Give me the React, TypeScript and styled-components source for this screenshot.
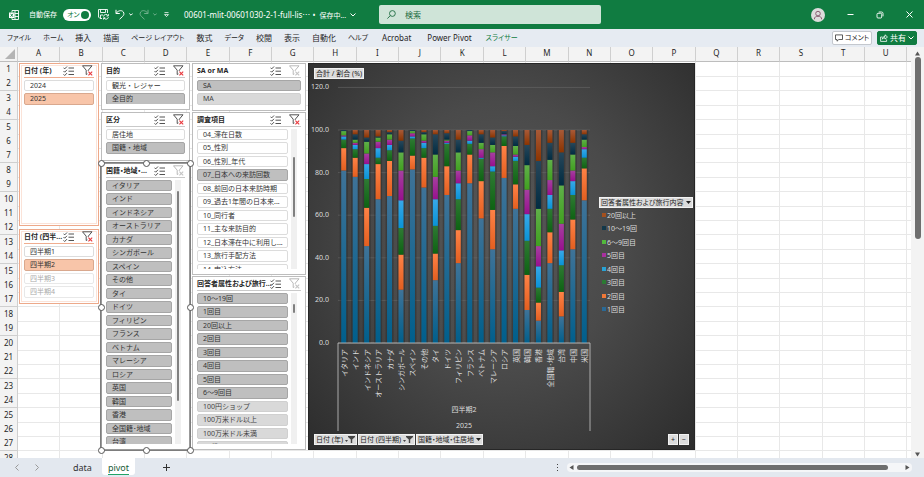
import React, { useEffect, useState } from "react";
import styled, { createGlobalStyle, css } from "styled-components";

const GlobalStyle = createGlobalStyle`
  * { box-sizing: border-box; }
  html, body, #root { height: 100%; }
  body {
    margin: 0;
    overflow: hidden;
    font-family: "Noto Sans", "Noto Sans CJK JP", sans-serif;
    font-size: 8px;
    color: #262626;
  }
  button, input { font: inherit; color: inherit; border: 0; background: none; padding: 0; margin: 0; }
  svg { display: block; flex: none; }
`;

/* ---------- window ---------- */

const Window = styled.div`
  display: flex;
  flex-direction: column;
  height: 100vh;
  background: #e3e8ef;
`;

const TitleBar = styled.header`
  display: flex;
  align-items: center;
  flex: none;
  height: 29px;
  background: #107c41;
  color: #fff;
`;

const TitleLeft = styled.div`
  display: flex;
  align-items: center;
  flex: none;
  width: 379px;
  padding-left: 9px;
`;

const AutoSave = styled.label`
  display: flex;
  align-items: center;
  gap: 6px;
  margin-left: 10px;
  font-size: 7px;
  line-height: 12px;
`;

const Switch = styled.span`
  position: relative;
  display: flex;
  align-items: center;
  width: 28px;
  height: 12px;
  padding-left: 4px;
  border-radius: 6px;
  background: #fff;
  color: #107c41;
  font-feature-settings: "palt";
  &::after {
    content: "";
    position: absolute;
    right: 2px;
    width: 8px;
    height: 8px;
    border-radius: 50%;
    background: #107c41;
  }
`;

const SwitchInput = styled.input`
  position: absolute;
  inset: 0;
  margin: 0;
  opacity: 0;
`;

const QuickAccess = styled.div`
  display: flex;
  align-items: center;
  gap: 6px;
  margin-left: 7px;
`;

const QuickButton = styled.button<{ $dim?: boolean }>`
  display: flex;
  align-items: center;
  gap: 4px;
  opacity: ${(p) => (p.$dim ? 0.4 : 1)};
`;

const DocTitle = styled.button`
  display: flex;
  align-items: center;
  gap: 4px;
  margin-left: 14px;
  font-size: 8px;
  white-space: nowrap;
`;

const SavingState = styled.span`
  font-size: 7px;
`;

const SearchBox = styled.label`
  display: flex;
  align-items: center;
  gap: 9px;
  flex: 0 1 222px;
  height: 19px;
  padding-left: 8px;
  border-radius: 2px;
  background: #cfe4d8;
  color: #1c6b40;
`;

const SearchInput = styled.input`
  width: 100%;
  font-size: 8px;
  outline: 0;
  &::placeholder { color: #1c6b40; opacity: 1; }
`;

const WindowControls = styled.div`
  display: flex;
  align-items: center;
  gap: 22px;
  margin-left: auto;
  padding-right: 11px;
`;

const Ribbon = styled.nav`
  display: flex;
  align-items: center;
  flex: none;
  height: 18px;
  padding: 0 7px;
  background: #e6ebf2;
`;

const RibbonTabs = styled.div`
  display: flex;
  gap: 12px;
`;

type TabKind = "kanji" | "kana" | "latin";

const RibbonTab = styled.button<{ $kind: TabKind; $active?: boolean }>`
  padding: 0 ${(p) => (p.$kind === "latin" ? 2 : 0)}px;
  white-space: nowrap;
  font-size: ${(p) => (p.$kind === "kana" ? 7 : 8)}px;
  line-height: 14px;
  font-feature-settings: "palt";
  color: ${(p) => (p.$active ? "#107c41" : "#262626")};
`;

const RibbonActions = styled.div`
  display: flex;
  gap: 5px;
  margin-left: auto;
`;

const ActionButton = styled.button<{ $primary?: boolean }>`
  display: flex;
  align-items: center;
  justify-content: center;
  gap: 2px;
  width: 40px;
  height: 14px;
  border: 1px solid ${(p) => (p.$primary ? "#107c41" : "#c4c8ce")};
  border-radius: 2px;
  background: ${(p) => (p.$primary ? "#107c41" : "#fff")};
  color: ${(p) => (p.$primary ? "#fff" : "#262626")};
  font-size: ${(p) => (p.$primary ? 8 : 7)}px;
  line-height: 12px;
  white-space: nowrap;
  font-feature-settings: "palt";
`;

/* ---------- sheet ---------- */

const SheetArea = styled.main`
  display: flex;
  flex: 1;
  min-height: 0;
`;

const Sheet = styled.div`
  position: relative;
  flex: 1;
  min-width: 0;
  overflow: hidden;
  background: #fff;
`;

/* 20 columns take 847px and 5 rows take 72px. */
const Grid = styled.table<{ $columns: number }>`
  display: block;
  width: calc(18px + ${(p) => p.$columns} * 847px / 20);
  border-collapse: collapse;
`;

const GridHead = styled.thead`
  display: block;
`;

const GridBody = styled.tbody<{ $rows: number }>`
  display: grid;
  grid-template-rows: repeat(${(p) => p.$rows}, minmax(0, 1fr));
  height: calc(${(p) => p.$rows} * 72px / 5);
`;

const GridRow = styled.tr<{ $columns: number }>`
  display: grid;
  grid-template-columns: 18px repeat(${(p) => p.$columns}, minmax(0, 1fr));
`;

const ColHead = styled.th`
  height: 15px;
  padding: 0;
  border-right: 1px solid #cfcfcf;
  border-bottom: 1px solid #bdbdbd;
  background: #f3f3f3;
  font-size: 8px;
  font-weight: 400;
  line-height: 11px;
`;

const CornerHead = styled.th`
  display: flex;
  justify-content: flex-end;
  align-items: flex-end;
  padding: 2px;
  border-right: 1px solid #cfcfcf;
  border-bottom: 1px solid #bdbdbd;
  background: #f3f3f3;
`;

const RowHead = styled.th`
  padding: 0;
  border-right: 1px solid #cfcfcf;
  border-bottom: 1px solid #cfcfcf;
  background: #f3f3f3;
  font-size: 8px;
  font-weight: 400;
  line-height: 14px;
  text-align: center;
`;

const Cell = styled.td`
  padding: 0;
  border-right: 1px solid #e8e8e8;
  border-bottom: 1px solid #e8e8e8;
`;

const ObjectLayer = styled.div`
  position: absolute;
  top: 16px;
  left: 19px;
  display: flex;
  align-items: flex-start;
  gap: 2px;
`;

const SlicerColumn = styled.div<{ $width: number; $gap: number }>`
  display: flex;
  flex-direction: column;
  gap: ${(p) => p.$gap}px;
  width: ${(p) => p.$width}px;
`;

/* ---------- slicers ---------- */

type Tone = "orange" | "gray";

const SlicerBox = styled.section<{ $tone: Tone; $height: number; $selected?: boolean }>`
  position: relative;
  display: flex;
  flex-direction: column;
  height: ${(p) => p.$height}px;
  padding: 0 4px 5px;
  border: 1px solid ${(p) => (p.$tone === "orange" ? "#eda98a" : "#bdbdbd")};
  background: #fff;
  ${(p) => p.$tone === "orange" && css`box-shadow: inset 0 0 0 1px #fff, inset 0 0 0 2px #fbe3d8;`}
  ${(p) => p.$selected && css`z-index: 1; outline: 1px solid #7d7d7d; border-color: #9a9a9a;`}
`;

const SlicerHeader = styled.div<{ $tone: Tone }>`
  display: flex;
  align-items: center;
  flex: none;
  gap: 8px;
  height: 14px;
  margin-bottom: 2px;
  padding-right: 1px;
  border-bottom: 1px solid ${(p) => (p.$tone === "orange" ? "#efad90" : "#c9c9c9")};
`;

const SlicerTitle = styled.h2`
  flex: 1;
  min-width: 0;
  margin: 0;
  font-size: 7px;
  line-height: 12px;
  font-weight: 700;
  white-space: nowrap;
  font-feature-settings: "palt";
`;

const IconButton = styled.button`
  display: flex;
  flex: none;
`;

const SlicerBody = styled.div`
  display: flex;
  flex: 1;
  gap: 3px;
  min-height: 0;
`;

const SlicerList = styled.div`
  display: flex;
  flex-direction: column;
  flex: 1;
  gap: 2px;
  min-width: 0;
  overflow: hidden;
`;

type ItemState = "on" | "off" | "empty" | "faded";

const itemStyles = {
  gray: {
    on: css`background: #bfbfbf; border-color: #a6a6a6;`,
    off: css`background: #fff; border-color: #dcdcdc;`,
    empty: css`background: #d9d9d9; border-color: #d0d0d0; color: #444;`,
    faded: css`background: #fff; border-color: #e8e8e8; color: #aaa;`,
  },
  orange: {
    on: css`background: #f8c5a9; border-color: #d9a88e;`,
    off: css`background: #fff; border-color: #dcdcdc;`,
    empty: css`background: #fff; border-color: #e8e8e8;`,
    faded: css`background: #fff; border-color: #e8e8e8; color: #aaa;`,
  },
};

const SlicerItem = styled.button<{ $tone: Tone; $state: ItemState }>`
  flex: none;
  height: 11px;
  padding: 0 5px;
  border: 1px solid;
  border-radius: 2px;
  color: #333;
  font-size: 7px;
  line-height: 9px;
  text-align: left;
  white-space: nowrap;
  overflow: hidden;
  &:nth-child(even) { height: 12px; line-height: 10px; }
  ${(p) => itemStyles[p.$tone][p.$state]}
`;

const SlicerTrack = styled.div<{ $before: number }>`
  flex: none;
  width: 6px;
  margin-right: 4px;
  padding: ${(p) => p.$before}px 2px 0;
  background: #f0f0f0;
`;

const SlicerThumb = styled.div<{ $length: number }>`
  height: ${(p) => p.$length}px;
  border-radius: 1px;
  background: #808080;
`;

const Handle = styled.span<{ $x: string; $y: string }>`
  position: absolute;
  left: ${(p) => p.$x};
  top: ${(p) => p.$y};
  width: 7px;
  height: 7px;
  margin: -3px;
  border: 1px solid #555;
  border-radius: 50%;
  background: #fff;
`;

const MultiSelectIcon = () => (
  <svg width="11" height="10" viewBox="0 0 11 10" fill="none" stroke="#404040" strokeWidth="0.9">
    <path d="M0.5 1.7l1.2 1.2L4 0.5M0.5 5l1.2 1.2L4 3.8M0.5 8.3l1.2 1.2L4 7.1M5.5 2H11M5.5 5.2H11M5.5 8.5H11" />
  </svg>
);

const FilterIcon = ({ active }: { active: boolean }) => (
  <svg width="11" height="11" viewBox="0 0 11 11" fill="none" stroke={active ? "#404040" : "#b0b0b0"} strokeWidth="0.9">
    <path d="M0.5 0.8H10L6.3 5.2V6M0.5 0.8L4.2 5.2V9.5L5.4 8.9" />
    <path d="M6.4 6.6L10.2 10.4M10.2 6.6L6.4 10.4" stroke={active ? "#e8383d" : "#c4c4c4"} strokeWidth="1.1" />
  </svg>
);

interface SlicerProps {
  title: string;
  height: number;
  tone?: Tone;
  items: [string, ItemState][];
  filtered?: boolean;
  selected?: boolean;
  scroll?: [number, number];
}

const near = "-1px";
const mid = "50%";
const far = "calc(100% + 1px)";
const handles = [
  [near, near], [mid, near], [far, near],
  [near, mid], [far, mid],
  [near, far], [mid, far], [far, far],
];

function Slicer({ title, height, tone = "gray", items, filtered = true, selected, scroll }: SlicerProps) {
  return (
    <SlicerBox $tone={tone} $height={height} $selected={selected} aria-label={title}>
      <SlicerHeader $tone={tone}>
        <SlicerTitle>{title}</SlicerTitle>
        <IconButton aria-label="複数選択"><MultiSelectIcon /></IconButton>
        <IconButton aria-label="フィルターのクリア"><FilterIcon active={filtered} /></IconButton>
      </SlicerHeader>
      <SlicerBody>
        <SlicerList>
          {items.map(([label, state]) => (
            <SlicerItem key={label} $tone={tone} $state={state} aria-pressed={state === "on"}>
              {label}
            </SlicerItem>
          ))}
        </SlicerList>
        {scroll && (
          <SlicerTrack $before={scroll[0]}>
            <SlicerThumb $length={scroll[1]} />
          </SlicerTrack>
        )}
      </SlicerBody>
      {selected && handles.map(([x, y]) => <Handle key={x + y} $x={x} $y={y} />)}
    </SlicerBox>
  );
}

const all = (labels: string[], state: ItemState): [string, ItemState][] => labels.map((l) => [l, state]);

/* ---------- chart ---------- */

const ChartBox = styled.section`
  display: flex;
  flex-direction: column;
  width: 387px;
  height: 387px;
  padding: 4px 5px;
  border: 1px solid #262626;
  background: radial-gradient(ellipse at 50% 45%, #585858 0%, #4a4a4a 45%, #2c2c2c 100%);
  color: #dcdcdc;
`;

const FieldButton = styled.button`
  display: flex;
  align-items: center;
  justify-content: center;
  gap: 2px;
  min-width: 10px;
  height: 11px;
  padding: 0 1px;
  border: 1px solid #f2f2f2;
  background: #dcdcdc;
  color: #1c1c1c;
  font-size: 7px;
  line-height: 9px;
  white-space: nowrap;
  font-feature-settings: "palt";
`;

const ChartMiddle = styled.div`
  display: flex;
  flex: 1;
  min-height: 0;
`;

const Legend = styled.div`
  flex: 1;
  min-width: 0;
  padding-top: 118px;
`;

const LegendList = styled.ul`
  margin: 0;
  padding: 0 3px;
  list-style: none;
`;

const LegendItem = styled.li<{ $color: string }>`
  display: flex;
  align-items: center;
  gap: 1px;
  height: 13px;
  font-size: 7px;
  &:nth-child(even) { height: 14px; }
  &::before {
    content: "";
    width: 4px;
    height: 4px;
    background: ${(p) => p.$color};
  }
`;

const FieldRow = styled.div`
  display: flex;
  gap: 1px;
`;

const Spacer = styled.span`
  flex: 1;
`;

const Caret = () => (
  <svg width="5" height="3" viewBox="0 0 5 3"><path d="M0 0h5L2.5 3z" fill="#222" /></svg>
);

const CaretFilter = () => (
  <svg width="10" height="7" viewBox="0 0 10 7" fill="#444">
    <path d="M0 4h3L1.5 6zM3 0h7v1L7.2 3.6V7H5.8V3.6L3 1z" />
  </svg>
);

const series = [
  { name: "1回目", top: "#3f7398", bottom: "#005f8c", key: "#2a6a96" },
  { name: "2回目", top: "#ff8246", bottom: "#e35f20", key: "#f07838" },
  { name: "3回目", top: "#2f7a34", bottom: "#0d6312", key: "#2b7a33" },
  { name: "4回目", top: "#38a8e8", bottom: "#0a93d6", key: "#27a3d6" },
  { name: "5回目", top: "#a640a0", bottom: "#98108e", key: "#a8309f" },
  { name: "6〜9回目", top: "#60b04a", bottom: "#41a020", key: "#52b83c" },
  { name: "10〜19回", top: "#28475a", bottom: "#012c42", key: "#12384a" },
  { name: "20回以上", top: "#a85a38", bottom: "#8c3400", key: "#a3501f" },
];

/* Running totals (%) for 1回目 … 10〜19回; 20回以上 always closes the bar at 100. */
const bars: [string, number[]][] = [
  ["イタリア", [81, 91.5, 95.5, 97, 97.5, 99.5, 100]],
  ["インド", [78, 87, 91, 93, 94, 95.5, 98]],
  ["インドネシア", [45.5, 63.5, 77, 84, 89, 94.5, 96.5]],
  ["オーストラリア", [67.5, 84, 87, 91.5, 94.5, 96.5, 97]],
  ["カナダ", [69, 85.5, 90.5, 93, 95.5, 98, 99]],
  ["シンガポール", [25, 41.5, 54, 67, 81, 89.5, 95]],
  ["スペイン", [81.5, 88, 96, 97, 98.5, 99.5, 100]],
  ["その他", [73, 87, 91.5, 94, 95, 98, 99]],
  ["タイ", [29.5, 42, 55, 67.5, 78, 88.5, 98]],
  ["ドイツ", [69.5, 83, 93.5, 94, 95, 95.5, 98.5]],
  ["フィリピン", [37.5, 53, 67.5, 75, 81, 89.5, 95.5]],
  ["フランス", [75, 88.5, 93.5, 95, 97.5, 99.5, 100]],
  ["ベトナム", [58.5, 76, 86.5, 87, 91, 94, 98]],
  ["マレーシア", [44, 62.5, 80.5, 83, 89.5, 93, 96.5]],
  ["ロシア", [77.5, 92.5, 97, 97.5, 98, 98, 99.5]],
  ["英国", [63, 74.5, 85.5, 87.5, 88.5, 92.5, 97]],
  ["韓国", [15.5, 32, 48, 60.5, 72, 83.5, 93]],
  ["香港", [10.5, 19, 26, 36, 45.5, 63, 85.5]],
  ["全国籍･地域", [37.5, 52, 63, 69.5, 76.5, 86, 94]],
  ["台湾", [12.5, 24, 36.5, 43.5, 56, 74, 89.5]],
  ["中国", [44, 58, 69.5, 76, 81, 88.5, 94]],
  ["米国", [67, 82, 87, 91, 92, 95.5, 98]],
];

const plot = { left: 24, right: 276, zero: 264, hundred: 51 };
const yOf = (v: number) => plot.zero - ((plot.zero - plot.hundred) * v) / 100;
const step = (plot.right - plot.left) / bars.length;

const PlotSvg = styled.svg`
  overflow: visible;
  font-size: 7px;
  fill: #dcdcdc;
`;

function Plot() {
  return (
    <PlotSvg width="285" height="355" viewBox="0 0 285 355" role="img" aria-label="割合 (%)">
      <defs>
        {series.map((s, i) => (
          <linearGradient key={s.name} id={`fill${i}`} x1="0" y1="0" x2="0" y2="1">
            <stop offset="0" stopColor={s.top} />
            <stop offset="1" stopColor={s.bottom} />
          </linearGradient>
        ))}
      </defs>
      {[0, 20, 40, 60, 80, 100, 120].map((v) => (
        <g key={v}>
          <line x1={plot.left} x2={plot.right} y1={yOf(v)} y2={yOf(v)} stroke="#686868" strokeWidth="0.6" />
          <text x="15" y={yOf(v) + 2} textAnchor="end">{v.toFixed(1)}</text>
        </g>
      ))}
      {bars.map(([name, totals], i) => {
        const center = plot.left + step * (i + 0.5);
        const edges = [0, ...totals, 100];
        return (
          <g key={name}>
            <rect x={center - 4} y={plot.hundred} width="8" height={plot.zero - plot.hundred} fill="#222" opacity="0.4" />
            {series.map((s, k) => (
              <rect
                key={s.name}
                x={center - 2.5}
                width="5"
                y={yOf(edges[k + 1])}
                height={yOf(edges[k]) - yOf(edges[k + 1])}
                fill={`url(#fill${k})`}
              />
            ))}
            <text transform={`translate(${center + 3} 270) rotate(-90)`} textAnchor="end">{name}</text>
          </g>
        );
      })}
      <path d={`M${plot.left} 352V${plot.zero}H${plot.right}V352`} fill="none" stroke="#c8c8c8" strokeWidth="0.8" />
      <text x="150" y="333" textAnchor="middle">四半期2</text>
      <text x="150" y="349" textAnchor="middle">2025</text>
    </PlotSvg>
  );
}

function Chart() {
  return (
    <ChartBox>
      <FieldRow><FieldButton>合計 / 割合 (%)</FieldButton></FieldRow>
      <ChartMiddle>
        <Plot />
        <Legend>
          <FieldButton>回答者属性および旅行内容 <Caret /></FieldButton>
          <LegendList>
            {[...series].reverse().map((s) => (
              <LegendItem key={s.name} $color={s.key}>{s.name}</LegendItem>
            ))}
          </LegendList>
        </Legend>
      </ChartMiddle>
      <FieldRow>
        <FieldButton>日付 (年) <CaretFilter /></FieldButton>
        <FieldButton>日付 (四半期) <CaretFilter /></FieldButton>
        <FieldButton>国籍・地域・住居地 <Caret /></FieldButton>
        <Spacer />
        <FieldButton>+</FieldButton>
        <FieldButton>−</FieldButton>
      </FieldRow>
    </ChartBox>
  );
}

/* ---------- scroll bars and sheet tabs ---------- */

const VerticalBar = styled.div`
  display: flex;
  flex-direction: column;
  align-items: center;
  flex: none;
  width: 13px;
  padding: 4px 0 1px;
  background: #f3f3f3;
`;

const VerticalThumb = styled.div`
  width: 6px;
  height: 182px;
  margin-top: 1px;
  margin-bottom: auto;
  border-radius: 3px;
  background: #6e6e6e;
`;

const BottomBar = styled.footer`
  display: flex;
  flex: none;
  height: 19px;
  background: #e3e8ef;
`;

const SheetNav = styled.div`
  display: flex;
  align-items: center;
  gap: 16px;
  width: 67px;
  padding-left: 15px;
`;

const SheetTab = styled.button<{ $active?: boolean }>`
  height: 17px;
  margin-right: 4px;
  padding: 0 6px;
  border-radius: 0 0 3px 3px;
  background: ${(p) => (p.$active ? "#fff" : "transparent")};
  color: ${(p) => (p.$active ? "#185c37" : "#333")};
  font-size: 9px;
  line-height: 17px;
`;

const TabLabel = styled.span<{ $active?: boolean }>`
  display: block;
  height: 16px;
  border-bottom: 1px solid ${(p) => (p.$active ? "#21a366" : "transparent")};
`;

const AddSheet = styled.button`
  margin-left: 24px;
`;

const HorizontalBar = styled.div`
  display: flex;
  align-items: center;
  gap: 3px;
  width: 345px;
  height: 9px;
  margin: 5px 12px 0 8px;
  padding: 0 2px;
  border-radius: 4px;
  background: #f5f6f8;
`;

const HorizontalThumb = styled.div`
  flex: 1;
  height: 5px;
  margin-right: 14px;
  border-radius: 3px;
  background: #6e6e6e;
`;

const MoreIcon = styled.svg`
  margin: 5px 0 0 auto;
`;

const Arrow = ({ d }: { d: string }) => (
  <svg width="5" height="5" viewBox="0 0 5 5"><path d={d} fill="#555" /></svg>
);

const Chevron = () => (
  <svg width="6" height="4" viewBox="0 0 6 4" fill="none" stroke="currentColor"><path d="M0.5 0.5L3 3L5.5 0.5" /></svg>
);

const tabs: [string, TabKind][] = [
  ["ファイル", "kana"], ["ホーム", "kana"], ["挿入", "kanji"], ["描画", "kanji"], ["ページ レイアウト", "kana"],
  ["数式", "kanji"], ["データ", "kana"], ["校閲", "kanji"], ["表示", "kanji"], ["自動化", "kanji"],
  ["ヘルプ", "kana"], ["Acrobat", "latin"], ["Power Pivot", "latin"], ["スライサー", "kana"],
];

const countries = ["イタリア", "インド", "インドネシア", "オーストラリア", "カナダ", "シンガポール", "スペイン", "その他", "タイ", "ドイツ", "フィリピン", "フランス", "ベトナム", "マレーシア", "ロシア", "英国", "韓国", "香港", "全国籍･地域", "台湾"];

const columnName = (i: number): string => (i < 26 ? "" : columnName(Math.floor(i / 26) - 1)) + String.fromCharCode(65 + (i % 26));

/* Number of columns and rows needed to fill the window. */
const measure = () => ({
  columns: Math.ceil(((window.innerWidth - 31) * 20) / 847),
  rows: Math.ceil(((window.innerHeight - 81) * 5) / 72),
});

function useGridSize() {
  const [size, setSize] = useState(measure);
  useEffect(() => {
    const update = () => setSize(measure());
    window.addEventListener("resize", update);
    return () => window.removeEventListener("resize", update);
  }, []);
  return size;
}

function SheetGrid() {
  const size = useGridSize();
  const columns = Array.from({ length: size.columns }, (_, i) => columnName(i));
  const rows = Array.from({ length: size.rows }, (_, i) => i + 1);
  return (
    <Grid $columns={size.columns}>
      <GridHead>
        <GridRow $columns={size.columns}>
          <CornerHead aria-label="すべて選択"><svg width="10" height="10" viewBox="0 0 10 10"><path d="M10 0V10H0z" fill="#b4b4b4" /></svg></CornerHead>
          {columns.map((c) => <ColHead key={c} scope="col">{c}</ColHead>)}
        </GridRow>
      </GridHead>
      <GridBody $rows={size.rows}>
        {rows.map((r) => (
          <GridRow key={r} $columns={size.columns}>
            <RowHead scope="row">{r}</RowHead>
            {columns.map((c) => <Cell key={c} />)}
          </GridRow>
        ))}
      </GridBody>
    </Grid>
  );
}

export default function App() {
  return (
    <Window lang="ja">
      <GlobalStyle />
      <TitleBar>
        <TitleLeft>
          <svg width="10" height="10" viewBox="0 0 10 10" fill="none" stroke="#fff">
            <path d="M3 2.5V0.5H9.5V9.5H3V7.5M6 0.5V9.5M6 3.5H9.5M6 6.5H9.5" strokeWidth="0.9" />
            <path d="M0 2.5H5.5V8H0z" fill="#fff" stroke="none" />
            <path d="M1.5 3.7L4 6.8M4 3.7L1.5 6.8" stroke="#107c41" strokeWidth="0.9" />
          </svg>
          <AutoSave>
            自動保存
            <Switch>オン<SwitchInput type="checkbox" role="switch" defaultChecked /></Switch>
          </AutoSave>
          <QuickAccess>
            <QuickButton aria-label="保存">
              <svg width="11" height="11" viewBox="0 0 11 11" fill="none" stroke="#fff" strokeWidth="0.9">
                <path d="M4 9.5H2L0.5 8V0.5H9.5V4M2.5 0.5V3.5H7.5V0.5M2.5 9V6H5" />
                <path d="M5.5 7.5A2.4 2.4 0 0 1 10 6.7M10.3 5V7H8.5M10.4 8.2A2.4 2.4 0 0 1 6 9M5.6 10.6V8.8H7.3" />
              </svg>
            </QuickButton>
            <QuickButton aria-label="元に戻す">
              <svg width="10" height="11" viewBox="0 0 10 11" fill="none" stroke="#fff"><path d="M1 0.8V4.5H4.8M1.2 4.3C3 1.5 6.5 0.8 8.2 2.8C9.6 4.6 8.8 6.3 7.5 7.5L4.5 10.3" /></svg>
              <svg width="4" height="3" viewBox="0 0 4 3" fill="none" stroke="#fff"><path d="M0.3 0.5L2 2.2L3.7 0.5" /></svg>
            </QuickButton>
            <QuickButton $dim aria-label="やり直し">
              <svg width="10" height="11" viewBox="0 0 10 11" fill="none" stroke="#fff"><path d="M9 0.8V4.5H5.2M8.8 4.3C7 1.5 3.5 0.8 1.8 2.8C0.4 4.6 1.2 6.3 2.5 7.5L5.5 10.3" /></svg>
              <svg width="4" height="3" viewBox="0 0 4 3" fill="none" stroke="#fff"><path d="M0.3 0.5L2 2.2L3.7 0.5" /></svg>
            </QuickButton>
            <QuickButton aria-label="クイック アクセス ツール バーのカスタマイズ">
              <svg width="7" height="6" viewBox="0 0 7 6" fill="none" stroke="#fff" strokeWidth="0.8"><path d="M1.5 0.6H5.5M1.5 2.6H5.5L3.5 4.6z" /></svg>
            </QuickButton>
          </QuickAccess>
          <DocTitle>00601-mlit-00601030-2-1-full-lis⋯ • <SavingState>保存中...</SavingState> <Chevron /></DocTitle>
        </TitleLeft>
        <SearchBox>
          <svg width="9" height="9" viewBox="0 0 9 9" fill="none" stroke="currentColor" strokeWidth="0.9"><circle cx="5.4" cy="3.5" r="2.9" /><path d="M3.3 5.6L0.4 8.6" /></svg>
          <SearchInput placeholder="検索" aria-label="検索" />
        </SearchBox>
        <WindowControls>
          <IconButton aria-label="アカウント">
            <svg width="14" height="14" viewBox="0 0 14 14" fill="none"><circle cx="7" cy="7" r="7" fill="#dcdcdc" /><circle cx="7" cy="5.6" r="2.3" stroke="#8a5f72" /><path d="M3.3 11.3C3.5 8.8 5 8.3 7 8.3S10.5 8.8 10.7 11.3" stroke="#8a5f72" /></svg>
          </IconButton>
          <IconButton aria-label="最小化"><svg width="7" height="7" viewBox="0 0 7 7" stroke="#fff"><path d="M0.5 3.5H6.5" /></svg></IconButton>
          <IconButton aria-label="元に戻す (縮小)"><svg width="8" height="8" viewBox="0 0 8 8" fill="none" stroke="#fff" strokeWidth="0.9"><rect x="1" y="2.3" width="4.7" height="4.7" rx="1" /><path d="M2.7 1H5.5Q7 1 7 2.5V5.3" /></svg></IconButton>
          <IconButton aria-label="閉じる"><svg width="7" height="7" viewBox="0 0 7 7" stroke="#fff"><path d="M0.5 0.5L6.5 6.5M6.5 0.5L0.5 6.5" /></svg></IconButton>
        </WindowControls>
      </TitleBar>

      <Ribbon>
        <RibbonTabs>
          {tabs.map(([label, kind]) => (
            <RibbonTab key={label} $kind={kind} $active={label === "スライサー"}>{label}</RibbonTab>
          ))}
        </RibbonTabs>
        <RibbonActions>
          <ActionButton>
            <svg width="8" height="8" viewBox="0 0 8 8" fill="none" stroke="#333" strokeWidth="0.8"><path d="M0.5 0.9H7.5V5.5H3.8L2 7.2V5.5H0.5z" /></svg>
            コメント
          </ActionButton>
          <ActionButton $primary>
            <svg width="8" height="8" viewBox="0 0 8 8" fill="none" stroke="#fff" strokeWidth="0.8"><path d="M2.5 3H0.6V7.4H6.6V5.5M2.3 5.2C2.5 3.2 3.6 2.5 5 2.4V0.8L7.5 3L5 5.1V3.7C3.8 3.7 3 4.1 2.3 5.2z" /></svg>
            共有
            <Chevron />
          </ActionButton>
        </RibbonActions>
      </Ribbon>

      <SheetArea>
        <Sheet>
          <SheetGrid />
          <ObjectLayer>
            <SlicerColumn $width={80} $gap={3}>
              <Slicer title="日付 (年)" height={163} tone="orange" items={[["2024", "off"], ["2025", "on"]]} />
              <Slicer title="日付 (四半..." height={75} tone="orange" items={[["四半期1", "off"], ["四半期2", "on"], ["四半期3", "faded"], ["四半期4", "faded"]]} />
            </SlicerColumn>
            <SlicerColumn $width={89} $gap={2}>
              <Slicer title="目的" height={47} items={[["観光・レジャー", "off"], ["全目的", "on"]]} />
              <Slicer title="区分" height={49} items={[["居住地", "off"], ["国籍・地域", "on"]]} />
              <Slicer title="国籍・地域・..." height={287} selected filtered={false} scroll={[11, 210]} items={all(countries, "on")} />
            </SlicerColumn>
            <SlicerColumn $width={114} $gap={1}>
              <Slicer title="SA or MA" height={48} filtered={false} items={[["SA", "on"], ["MA", "empty"]]} />
              <Slicer
                title="調査項目"
                height={163}
                scroll={[28, 60]}
                items={[
                  ["04_滞在日数", "off"], ["05_性別", "off"], ["06_性別_年代", "off"], ["07_日本への来訪回数", "on"],
                  ["08_前回の日本来訪時期", "off"], ["09_過去1年間の日本来...", "off"], ["10_同行者", "off"],
                  ["11_主な来訪目的", "off"], ["12_日本滞在中に利用し...", "off"], ["13_旅行手配方法", "off"], ["14_申込方法", "off"],
                ]}
              />
              <Slicer
                title="回答者属性および旅行..."
                height={174}
                filtered={false}
                scroll={[11, 9]}
                items={[
                  ...all(["10〜19回", "1回目", "20回以上", "2回目", "3回目", "4回目", "5回目", "6〜9回目"], "on"),
                  ...all(["100円ショップ", "100万米ドル以上", "100万米ドル未満", "10代"], "empty"),
                ]}
              />
            </SlicerColumn>
            <Chart />
          </ObjectLayer>
        </Sheet>
        <VerticalBar>
          <Arrow d="M0 4.5h5L2.5 0.5z" />
          <VerticalThumb />
          <Arrow d="M0 0.5h5L2.5 4.5z" />
        </VerticalBar>
      </SheetArea>

      <BottomBar>
        <SheetNav>
          <IconButton aria-label="前のシート"><svg width="4" height="7" viewBox="0 0 4 7" fill="none" stroke="#999"><path d="M3.5 0.5L0.5 3.5L3.5 6.5" /></svg></IconButton>
          <IconButton aria-label="次のシート"><svg width="4" height="7" viewBox="0 0 4 7" fill="none" stroke="#999"><path d="M0.5 0.5L3.5 3.5L0.5 6.5" /></svg></IconButton>
        </SheetNav>
        <SheetTab><TabLabel>data</TabLabel></SheetTab>
        <SheetTab $active><TabLabel $active>pivot</TabLabel></SheetTab>
        <AddSheet aria-label="新しいシート"><svg width="7" height="7" viewBox="0 0 7 7" stroke="#333"><path d="M3.5 0V7M0 3.5H7" /></svg></AddSheet>
        <MoreIcon width="3" height="9" viewBox="0 0 3 9" fill="#444"><path d="M1 1h1v1H1zM1 4h1v1H1zM1 7h1v1H1z" /></MoreIcon>
        <HorizontalBar>
          <Arrow d="M4.5 0v5L0.5 2.5z" />
          <HorizontalThumb />
          <Arrow d="M0.5 0v5L4.5 2.5z" />
        </HorizontalBar>
      </BottomBar>
    </Window>
  );
}
